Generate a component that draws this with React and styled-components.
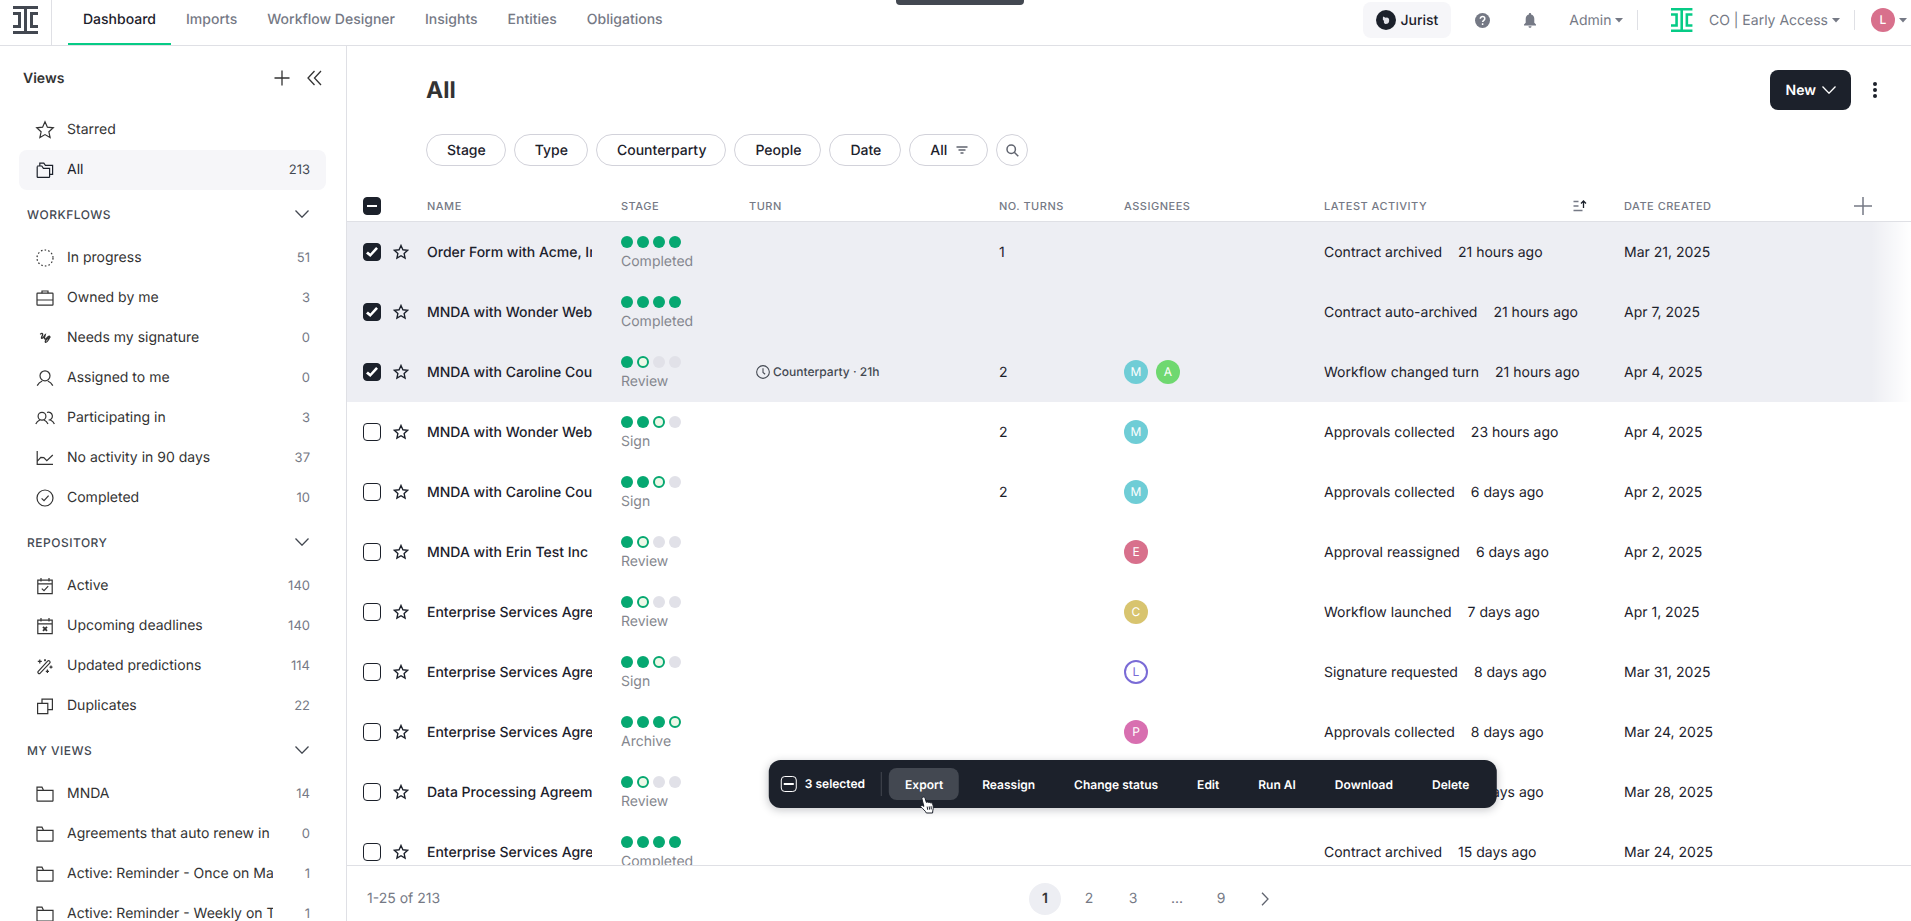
import React, { useEffect, useRef, useState } from "react";
import styled, { createGlobalStyle, css } from "styled-components";

const GlobalStyle = createGlobalStyle`
  * {
    box-sizing: border-box;
  }

  body {
    margin: 0;
    font-family: Inter, "Liberation Sans", sans-serif;
    font-size: 14px;
    color: #1c212b;
    background-color: white;
    text-rendering: geometricPrecision;
  }

  button,
  input {
    font: inherit;
    color: inherit;
    margin: 0;
    text-rendering: inherit;
  }

  a {
    color: inherit;
    text-decoration: none;
  }
`;

const Page = styled.div`
  height: 100vh;
  display: flex;
  flex-direction: column;
  overflow: hidden;
`;

const plainButton = css`
  display: flex;
  align-items: center;
  padding: 0;
  border: none;
  background: none;
  cursor: pointer;
`;

/* ---------- top bar ---------- */

const TopBar = styled.header`
  display: flex;
  height: 46px;
  flex-shrink: 0;
  border-bottom: 1px solid #dfe0e5;
`;

const HomeLink = styled.a`
  display: flex;
  justify-content: center;
  width: 52px;
  padding: 6px 0 0;
  border-right: 1px solid #dfe0e5;
`;

const Tabs = styled.nav`
  display: flex;
  margin-left: 16px;
`;

const Tab = styled.a`
  padding: 0 15px;
  line-height: 40px;
  font-weight: 500;
  white-space: nowrap;
  color: ${(props) => (props.$active ? "#1c212b" : "#757985")};
  border-bottom: 2px solid ${(props) => (props.$active ? "#06cb86" : "transparent")};
`;

const TopActions = styled.div`
  display: flex;
  align-items: center;
  height: 40px;
  margin-left: auto;
  padding-right: 4px;
  color: #757985;
`;

const JuristButton = styled.button`
  ${plainButton}
  gap: 4px;
  height: 36px;
  padding: 0 13px;
  margin-right: 23px;
  border-radius: 8px;
  background-color: #f6f6f9;
  color: #1c212b;
  font-weight: 500;
`;

const TopIconButton = styled.button`
  ${plainButton}
  justify-content: center;
  width: 16px;
  margin: 0 ${(props) => props.$space}px 0 0;
  color: #757985;
`;

const TopMenuButton = styled.button`
  ${plainButton}
  gap: 4px;
  white-space: nowrap;
`;

const TopDivider = styled.span`
  width: 1px;
  height: 20px;
  margin: 0 ${(props) => props.$after}px 0 14px;
  background-color: #dfe0e5;
`;

const OrgLogo = styled.span`
  display: flex;
  margin-right: 16px;
`;

const Notch = styled.div`
  position: absolute;
  top: 0;
  left: calc(50% + 4px);
  width: 128px;
  height: 5px;
  transform: translateX(-50%);
  border-radius: 0 0 4px 4px;
  background-color: #434851;
`;

/* ---------- sidebar ---------- */

const Body = styled.div`
  display: flex;
  flex: 1;
  min-height: 0;
`;

const Sidebar = styled.aside`
  width: 347px;
  flex-shrink: 0;
  padding: 0 20px 0 19px;
  overflow: hidden;
  border-right: 1px solid #dfe0e5;
  color: #333333;
`;

const SidebarHead = styled.div`
  display: flex;
  align-items: center;
  height: 64px;
  padding: 0 4px;
`;

const SidebarTitle = styled.h2`
  flex: 1;
  margin: 0;
  font-size: 14px;
  font-weight: 600;
`;

const SidebarIcon = styled.button`
  ${plainButton}
  margin-left: 17px;
`;

const SectionButton = styled.button`
  ${plainButton}
  justify-content: space-between;
  width: 100%;
  height: 48px;
  padding: 0 17px 0 8px;
  font-size: 12px;
  font-weight: 500;
  letter-spacing: 0.5px;
  text-transform: uppercase;
  color: #434851;
`;

const ViewList = styled.ul`
  margin: 0;
  padding: 0;
  list-style: none;
`;

const ViewLink = styled.a`
  display: flex;
  align-items: center;
  height: 40px;
  padding: 0 16px;
  border-radius: 8px;
  background-color: ${(props) => (props.$active ? "#f6f6f9" : "transparent")};
  color: ${(props) => (props.$active ? "#1c212b" : "#333333")};

  svg {
    flex-shrink: 0;
    margin-right: 12px;
  }
`;

const ViewName = styled.span`
  width: 206px;
  overflow: hidden;
  line-height: 20px;
  white-space: nowrap;
`;

const ViewCount = styled.span`
  margin-left: auto;
  font-size: 13px;
  line-height: 20px;
  color: ${(props) => (props.$active ? "#434851" : "#757985")};
`;

/* ---------- main ---------- */

const Main = styled.main`
  position: relative;
  display: flex;
  flex: 1;
  flex-direction: column;
  min-width: 0;
`;

const TitleRow = styled.div`
  display: flex;
  align-items: center;
  padding: 24px 24px 24px 79px;
`;

const Title = styled.h1`
  flex: 1;
  margin: 0;
  font-size: 23px;
  line-height: 40px;
  font-weight: 700;
  color: #333333;
`;

const NewButton = styled.button`
  ${plainButton}
  gap: 6px;
  height: 40px;
  padding: 0 15px 0 16px;
  border-radius: 8px;
  background-color: #1c212b;
  color: white;
  font-weight: 600;
`;

const KebabButton = styled.button`
  ${plainButton}
  justify-content: center;
  width: 24px;
  margin-left: 12px;
`;

const Filters = styled.div`
  display: flex;
  gap: 8px;
  padding-left: 79px;
`;

const FilterButton = styled.button`
  ${plainButton}
  gap: 9px;
  height: 32px;
  padding: 0 19px 0 20px;
  border: 1px solid #d2d2da;
  border-radius: 16px;
  font-weight: 500;
`;

const SearchButton = styled.button`
  ${plainButton}
  justify-content: center;
  width: 32px;
  height: 32px;
  border: 1px solid #d2d2da;
  border-radius: 50%;
`;

const TableFrame = styled.div`
  position: relative;
  flex: 1;
  min-height: 0;
  margin-top: 24px;
  overflow: hidden;

  &::after {
    content: "";
    position: absolute;
    top: 32px;
    right: 0;
    bottom: 0;
    width: 40px;
    background: linear-gradient(to right, rgba(255, 255, 255, 0), white);
    pointer-events: none;
  }
`;

const Table = styled.table`
  width: 100%;
  table-layout: fixed;
  border-collapse: separate;
  border-spacing: 0;
`;

const HeadCell = styled.th`
  height: 32px;
  padding: 0;
  border-bottom: 1px solid #dfe0e5;
  text-align: left;
  font-size: 11px;
  font-weight: 500;
  letter-spacing: 0.5px;
  text-transform: uppercase;
  white-space: nowrap;
  color: #757985;
`;

const SortHead = styled.div`
  display: flex;
  align-items: center;
  justify-content: space-between;
  padding-right: 37px;
`;

const AddColumn = styled.button`
  ${plainButton}
  margin: 0 39px 0 auto;
`;

const Row = styled.tr`
  height: 60px;
  background-color: ${(props) => (props.$selected ? "#edeef3" : "white")};
`;

const Cell = styled.td`
  padding: 0;
  line-height: 20px;
  white-space: nowrap;
`;

const TextCell = styled(Cell)`
  padding-top: 2px;
`;

const CheckCell = styled(Cell)`
  padding-left: 16px;
`;

const CheckHead = styled(HeadCell)`
  padding-left: 16px;
`;

const Checkbox = styled.input`
  display: grid;
  place-items: center;
  appearance: none;
  width: 18px;
  height: 18px;
  border: 1px solid #1c212b;
  border-radius: 4px;
  background-color: white;

  &:checked,
  &:indeterminate {
    background-color: #1c212b;
  }

  &:checked::before {
    content: "";
    width: 12px;
    height: 10px;
    background-color: white;
    clip-path: polygon(16% 46%, 0 64%, 36% 100%, 100% 18%, 84% 0, 36% 66%);
  }

  &:indeterminate::before {
    content: "";
    width: 10px;
    height: 2px;
    background-color: white;
    clip-path: none;
  }
`;

const BulkCheckbox = styled(Checkbox)`
  width: 16px;
  height: 16px;
  margin-right: 8px;
  border-color: white;
`;

const StarButton = styled.button`
  ${plainButton}
`;

const NameLink = styled.a`
  display: block;
  width: 165px;
  overflow: hidden;
  font-weight: 500;
`;

const StageCell = styled.div`
  display: flex;
  flex-direction: column;
  gap: 4px;
  padding-top: 4px;
  color: #84868e;
`;

const Dots = styled.div`
  display: flex;
  gap: 4px;
`;

const dotStyles = {
  done: css`
    background-color: #06a871;
  `,
  current: css`
    background-color: #edf8e8;
    border: 2px solid #06a871;
  `,
  todo: css`
    background-color: #e1e1e8;
  `,
};

const Dot = styled.span`
  width: 12px;
  height: 12px;
  border-radius: 50%;
  ${(props) => dotStyles[props.$state]}
`;

const Turn = styled.div`
  display: flex;
  align-items: center;
  gap: 3px;
  padding-left: 7px;
  font-size: 12px;
  font-weight: 500;
  color: #434851;
`;

const Avatars = styled.div`
  display: flex;
  gap: 8px;
`;

const Avatar = styled.span`
  display: flex;
  align-items: center;
  justify-content: center;
  width: 24px;
  height: 24px;
  border-radius: 50%;
  font-size: 12px;
  line-height: 1;
  font-weight: ${(props) => props.$weight || 400};
  color: ${(props) => (props.$outlined ? props.$color : "white")};
  background-color: ${(props) => (props.$outlined ? "white" : props.$color)};
  border: ${(props) => (props.$outlined ? `2px solid ${props.$color}` : "none")};
`;

const Activity = styled.div`
  display: flex;
  gap: 16px;
`;

/* ---------- bulk action bar ---------- */

const BulkBar = styled.div`
  position: absolute;
  left: calc(50% + 4px);
  bottom: 113px;
  transform: translateX(-50%);
  display: flex;
  align-items: center;
  gap: 7px;
  height: 48px;
  padding: 0 12px;
  border-radius: 12px;
  background-color: #1c212b;
  color: white;
  font-size: 12px;
  font-weight: 600;
  white-space: nowrap;
  box-shadow: 0 2px 8px rgba(28, 33, 43, 0.25);
`;

const SelectedLabel = styled.label`
  display: flex;
  align-items: center;
  padding-right: 16px;
  line-height: 24px;
  border-right: 1px solid #434851;
`;

const BulkAction = styled.button`
  ${plainButton}
  position: relative;
  height: 32px;
  padding: 0 16px;
  border-radius: 8px;
  background-color: ${(props) => (props.$hovered ? "#434851" : "transparent")};
`;

const Pointer = styled.svg`
  position: absolute;
  top: 28px;
  left: 30px;
`;

/* ---------- footer ---------- */

const Footer = styled.footer`
  display: grid;
  grid-template-columns: 1fr auto 1fr;
  align-items: center;
  height: 56px;
  flex-shrink: 0;
  padding-bottom: 2px;
  padding-top: 12px;
  border-top: 1px solid #dfe0e5;
  color: #757985;
`;

const ResultCount = styled.span`
  padding-left: 20px;
`;

const Pages = styled.nav`
  display: flex;
  gap: 12px;
  padding-left: 52px;
`;

const PageButton = styled.button`
  ${plainButton}
  justify-content: center;
  width: 32px;
  height: 32px;
  border-radius: 50%;
  font-weight: ${(props) => (props.$current ? 600 : 400)};
  background-color: ${(props) => (props.$current ? "#edeef3" : "transparent")};
  color: ${(props) => (props.$current ? "#333333" : "#757985")};
`;

/* ---------- icons ---------- */

const Icon = ({ size = 20, width = 1.2, children }) => (
  <svg
    width={size}
    height={size}
    viewBox="0 0 20 20"
    fill="none"
    stroke="currentColor"
    strokeWidth={width}
    aria-hidden="true"
  >
    {children}
  </svg>
);

const Logo = ({ height, color }) => (
  <svg width={(height * 25) / 28} height={height} viewBox="0 0 25 28" fill={color} aria-hidden="true">
    <path d="M0 0h25v3H14v22h11v3H0v-3h11V3H0z" />
    <path d="M0 6h8v16H0v-3h5V9H0zM25 6h-8v16h8v-3h-5V9h5z" />
  </svg>
);

const Caret = () => (
  <svg width="8" height="5" viewBox="0 0 8 5" fill="currentColor" aria-hidden="true">
    <path d="M0 0h8L4 4.5z" />
  </svg>
);

const ChevronDown = () => (
  <svg width="14" height="8" viewBox="0 0 14 8" fill="none" stroke="currentColor" strokeWidth="1.3" aria-hidden="true">
    <path d="M.5.5 7 7.2 13.5.5" />
  </svg>
);

const starPath =
  "M10 1.8l2.4 5.4 5.9.6-4.4 4 1.2 5.8-5.1-3-5.1 3 1.2-5.8-4.4-4 5.9-.6z";
const folderPath = "M2 4V16.6a.6.6 0 0 0 .6.6H17.4a.6.6 0 0 0 .6-.6V6.4H8.6L7 3.2H2V6.4H8";
const calendarPath = "M2.8 4.2H17.2V17.6H2.8zM2.8 7.8H17.2M6 2v3.4M14 2v3.4";

const icons = {
  star: <path d={starPath} />,
  folders: (
    <>
      <path d="M2.2 6.4V16.8a.6.6 0 0 0 .6.6H14a.6.6 0 0 0 .6-.6V8.4H8.4L6.8 6H2.2" />
      <path d="M4.8 6V3.2H8.8L10.4 5.4H17.6V14.4H14.6" />
    </>
  ),
  progress: <circle cx="10" cy="10" r="8" strokeDasharray="1.6 2.1" />,
  briefcase: (
    <>
      <rect x="2" y="5.2" width="16" height="12" rx=".6" />
      <path d="M2 12h16M7 5.2V3h6v2.2" />
    </>
  ),
  signature: (
    <path
      d="M5.2 6.4C6.4 5.2 8 5 7.6 6.8c-.3 1.4-1.8 3.2-.8 3.600 1.400.4 2.600-3 3.400-3.600-.4 1.600-1.400 4-.2 4.200 1.600.2 2.800-3.400 4.400-2.800 1.200.8-2.400 6.600-3.800 6.200-1.400-.6 1.400-4.600 5-5.600"
      strokeWidth="1.3"
    />
  ),
  person: (
    <>
      <circle cx="10" cy="7.8" r="5" />
      <path d="M2.2 17.6c1.4-2.6 3.2-3.8 5-4.6M17.8 17.6c-1.4-2.6-3.2-3.8-5-4.6" />
    </>
  ),
  people: (
    <>
      <circle cx="7" cy="8.2" r="3.9" />
      <path d="M.8 16c1-2.2 2.4-3.2 4-4M13 16c-1-2.2-2.4-3.2-4-4" />
      <path d="M12 4.5a3.9 3.9 0 1 1 1.6 7.5M15.4 12c1.6.8 3 1.8 4 4" />
    </>
  ),
  chart: <path d="M2.2 3V16.4H18M2.4 13.2l3.4-3.8 3 .2 3 3L17.8 7" />,
  done: (
    <>
      <circle cx="10" cy="10" r="8" />
      <path d="M6.6 10.4l2.4 2.2 4.6-5" />
    </>
  ),
  calendarCheck: <path d={`${calendarPath}M6.8 12.6l2.2 2 4.2-4.4`} />,
  calendarX: (
    <>
      <path d={calendarPath} />
      <path d="M8 10.8l4 4M12 10.8l-4 4" strokeWidth="1.8" />
    </>
  ),
  wand: (
    <>
      <path d="M3 15.6L12.6 5.2a1.4 1.4 0 0 1 2.1 2L5 17.4a1.4 1.4 0 0 1-2-1.8z" />
      <path d="M4.8 3.4v4M2.8 5.4h4M10 3.2v2M9 4.2h2M16 9.6v3M14.5 11.1h3M12.4 13.6v3.4M10.8 15.3h3.2" />
    </>
  ),
  duplicates: <path d="M2.6 7.4H12.8V17.6H2.6zM7 7.4V3.2H17.4V13.6H12.8" />,
  folder: <path d={folderPath} />,
};

const PointerHand = () => (
  <Pointer width="17" height="19" viewBox="0 0 17 19" aria-hidden="true">
    <path
      d="M4.2 1.2c1-.4 1.8.2 2.1 1.1l1.3 4.1c.8-.7 1.7-.5 2.1.2.8-.5 1.6-.3 2 .4 1-.4 1.9.1 2.2 1 .6 2 .9 4.1.2 6.2l-.3 2.8H7.6C6.4 14.6 4.3 13 2.3 11.2c-1-1.1.3-2.3 1.5-1.6l1.3.8L3.2 3c-.2-.8.2-1.5 1-1.8z"
      fill="white"
      stroke="#1c212b"
      strokeWidth="1"
    />
    <path d="M8.4 10.6l.5 3.2M10.4 10.4l.4 3.2M12.3 10.2l.2 3.2" stroke="#1c212b" fill="none" />
  </Pointer>
);

/* ---------- data ---------- */

const tabs = ["Dashboard", "Imports", "Workflow Designer", "Insights", "Entities", "Obligations"];

const sections = [
  {
    title: "Workflows",
    views: [
      { icon: "progress", name: "In progress", count: 51 },
      { icon: "briefcase", name: "Owned by me", count: 3 },
      { icon: "signature", name: "Needs my signature", count: 0 },
      { icon: "person", name: "Assigned to me", count: 0 },
      { icon: "people", name: "Participating in", count: 3 },
      { icon: "chart", name: "No activity in 90 days", count: 37 },
      { icon: "done", name: "Completed", count: 10 },
    ],
  },
  {
    title: "Repository",
    views: [
      { icon: "calendarCheck", name: "Active", count: 140 },
      { icon: "calendarX", name: "Upcoming deadlines", count: 140 },
      { icon: "wand", name: "Updated predictions", count: 114 },
      { icon: "duplicates", name: "Duplicates", count: 22 },
    ],
  },
  {
    title: "My views",
    views: [
      { icon: "folder", name: "MNDA", count: 14 },
      { icon: "folder", name: "Agreements that auto renew in", count: 0 },
      { icon: "folder", name: "Active: Reminder - Once on Ma", count: 1 },
      { icon: "folder", name: "Active: Reminder - Weekly on T", count: 1 },
    ],
  },
];

const filters = ["Stage", "Type", "Counterparty", "People", "Date"];

// step: index of the current stage dot, 4 = everything done
const stages = { Review: 1, Sign: 2, Archive: 3, Completed: 4 };

const people = {
  M: { color: "#6fcdd6" },
  A: { color: "#6fd870" },
  E: { color: "#d8708c" },
  C: { color: "#d8c46f" },
  L: { color: "#7a6bd6", outlined: true },
  P: { color: "#d86fb0" },
};

const contracts = [
  { name: "Order Form with Acme, Inc.", stage: "Completed", turns: 1, activity: "Contract archived", when: "21 hours ago", created: "Mar 21, 2025" },
  { name: "MNDA with Wonder Web", stage: "Completed", activity: "Contract auto-archived", when: "21 hours ago", created: "Apr 7, 2025" },
  { name: "MNDA with Caroline Cou", stage: "Review", turn: "Counterparty · 21h", turns: 2, assignees: ["M", "A"], activity: "Workflow changed turn", when: "21 hours ago", created: "Apr 4, 2025" },
  { name: "MNDA with Wonder Web", stage: "Sign", turns: 2, assignees: ["M"], activity: "Approvals collected", when: "23 hours ago", created: "Apr 4, 2025" },
  { name: "MNDA with Caroline Cou", stage: "Sign", turns: 2, assignees: ["M"], activity: "Approvals collected", when: "6 days ago", created: "Apr 2, 2025" },
  { name: "MNDA with Erin Test Inc", stage: "Review", assignees: ["E"], activity: "Approval reassigned", when: "6 days ago", created: "Apr 2, 2025" },
  { name: "Enterprise Services Agre", stage: "Review", assignees: ["C"], activity: "Workflow launched", when: "7 days ago", created: "Apr 1, 2025" },
  { name: "Enterprise Services Agre", stage: "Sign", assignees: ["L"], activity: "Signature requested", when: "8 days ago", created: "Mar 31, 2025" },
  { name: "Enterprise Services Agre", stage: "Archive", assignees: ["P"], activity: "Approvals collected", when: "8 days ago", created: "Mar 24, 2025" },
  { name: "Data Processing Agreem", stage: "Review", activity: "Approvals collected", when: "8 days ago", created: "Mar 28, 2025" },
  { name: "Enterprise Services Agre", stage: "Completed", activity: "Contract archived", when: "15 days ago", created: "Mar 24, 2025" },
];

const bulkActions = ["Export", "Reassign", "Change status", "Edit", "Run AI", "Download", "Delete"];

const dotState = (index, step) => {
  if (index < step) return "done";
  return index === step ? "current" : "todo";
};

/* ---------- components ---------- */

const PartialCheckbox = ({ as: Box = Checkbox, ...props }) => {
  const ref = useRef(null);
  useEffect(() => {
    ref.current.indeterminate = true;
  });
  return <Box ref={ref} type="checkbox" {...props} />;
};

const ViewItem = ({ icon, name, count, active }) => (
  <li>
    <ViewLink href="#" $active={active}>
      <Icon>{icons[icon]}</Icon>
      <ViewName>{name}</ViewName>
      {count !== undefined && <ViewCount $active={active}>{count}</ViewCount>}
    </ViewLink>
  </li>
);

const TopNavigation = () => (
  <TopBar>
    <HomeLink href="#" aria-label="Home">
      <Logo height={28} color="#434851" />
    </HomeLink>
    <Tabs>
      {tabs.map((tab) => (
        <Tab key={tab} href="#" $active={tab === "Dashboard"}>
          {tab}
        </Tab>
      ))}
    </Tabs>
    <TopActions>
      <JuristButton>
        <svg width="20" height="20" viewBox="0 0 20 20" aria-hidden="true">
          <circle cx="10" cy="10" r="10" fill="#1c212b" />
          <path d="M7 6.4l2.6 1.4 1.4-.2c2 .4 2.6 2.2 2 4.2-.4 1.6-2 2.4-3.6 2.2-1.4-.4-1.8-1.6-1.4-3L6.8 9.4z" fill="#e1e1e8" />
        </svg>
        Jurist
      </JuristButton>
      <TopIconButton $space={32} aria-label="Help">
        <svg width="15" height="15" viewBox="0 0 15 15" aria-hidden="true">
          <circle cx="7.5" cy="7.5" r="7.5" fill="currentColor" />
          <path d="M5.3 5.8c0-3 4.5-2.8 4.5-.1 0 1.6-2.2 1.7-2.2 3.4M7.6 10.3v1.6" stroke="white" strokeWidth="1.5" fill="none" />
        </svg>
      </TopIconButton>
      <TopIconButton $space={31} aria-label="Notifications">
        <svg width="12" height="15" viewBox="0 0 12 15" fill="currentColor" aria-hidden="true">
          <path d="M6 0c.7 0 1.1.4 1.1 1v.4c2 .5 3.2 2.2 3.2 4.4v4L12 11.6v.8H0v-.8l1.7-1.8v-4c0-2.2 1.2-3.9 3.2-4.4V1c0-.6.4-1 1.1-1zM4.5 13.2h3c0 2-3 2-3 0z" />
        </svg>
      </TopIconButton>
      <TopMenuButton>
        Admin <Caret />
      </TopMenuButton>
      <TopDivider $after={33} />
      <OrgLogo>
        <Logo height={24} color="#06cb86" />
      </OrgLogo>
      <TopMenuButton>
        CO | Early Access <Caret />
      </TopMenuButton>
      <TopDivider $after={16} />
      <TopMenuButton aria-label="Account">
        <Avatar $color="#d8708c" $weight={500}>
          L
        </Avatar>
        <Caret />
      </TopMenuButton>
    </TopActions>
    <Notch />
  </TopBar>
);

const ViewsSidebar = () => (
  <Sidebar>
    <SidebarHead>
      <SidebarTitle>Views</SidebarTitle>
      <SidebarIcon aria-label="Add view">
        <svg width="16" height="16" viewBox="0 0 16 16" fill="none" stroke="currentColor" strokeWidth="1.3">
          <path d="M8 .5v15M.5 8h15" />
        </svg>
      </SidebarIcon>
      <SidebarIcon aria-label="Collapse sidebar">
        <svg width="15" height="16" viewBox="0 0 15 16" fill="none" stroke="currentColor" strokeWidth="1.3">
          <path d="M7.5 1L1 8l6.5 7M14 1L7.5 8l6.5 7" />
        </svg>
      </SidebarIcon>
    </SidebarHead>
    <ViewList>
      <ViewItem icon="star" name="Starred" />
      <ViewItem icon="folders" name="All" count={213} active />
    </ViewList>
    {sections.map((section) => (
      <section key={section.title}>
        <SectionButton>
          {section.title}
          <ChevronDown />
        </SectionButton>
        <ViewList>
          {section.views.map((view) => (
            <ViewItem key={view.name} {...view} />
          ))}
        </ViewList>
      </section>
    ))}
  </Sidebar>
);

const ContractRow = ({ contract, selected, onToggle }) => {
  const step = stages[contract.stage];

  return (
    <Row $selected={selected}>
      <CheckCell>
        <Checkbox type="checkbox" aria-label={contract.name} checked={selected} onChange={onToggle} />
      </CheckCell>
      <Cell>
        <StarButton aria-label="Star">
          <Icon size={16} width={1.7}>
            {icons.star}
          </Icon>
        </StarButton>
      </Cell>
      <TextCell>
        <NameLink href="#">{contract.name}</NameLink>
      </TextCell>
      <Cell>
        <StageCell>
          <Dots>
            {[0, 1, 2, 3].map((i) => (
              <Dot key={i} $state={dotState(i, step)} />
            ))}
          </Dots>
          {contract.stage}
        </StageCell>
      </Cell>
      <Cell>
        {contract.turn && (
          <Turn>
            <svg width="14" height="14" viewBox="0 0 13 13" fill="none" stroke="currentColor">
              <circle cx="6.5" cy="6.5" r="5.9" />
              <path d="M6.5 3v4l2 1.6" />
            </svg>
            {contract.turn}
          </Turn>
        )}
      </Cell>
      <TextCell>{contract.turns}</TextCell>
      <Cell>
        <Avatars>
          {(contract.assignees || []).map((person) => (
            <Avatar key={person} $color={people[person].color} $outlined={people[person].outlined}>
              {person}
            </Avatar>
          ))}
        </Avatars>
      </Cell>
      <TextCell>
        <Activity>
          <span>{contract.activity}</span>
          <span>{contract.when}</span>
        </Activity>
      </TextCell>
      <TextCell>{contract.created}</TextCell>
      <Cell />
    </Row>
  );
};

const ContractTable = ({ selected, onToggle }) => (
  <TableFrame>
    <Table>
      <colgroup>
        <col width="46" />
        <col width="34" />
        <col width="194" />
        <col width="128" />
        <col width="250" />
        <col width="125" />
        <col width="200" />
        <col width="300" />
        <col width="200" />
        <col />
      </colgroup>
      <thead>
        <tr>
          <CheckHead>
            <PartialCheckbox aria-label="Select all" />
          </CheckHead>
          <HeadCell />
          <HeadCell>Name</HeadCell>
          <HeadCell>Stage</HeadCell>
          <HeadCell>Turn</HeadCell>
          <HeadCell>No. turns</HeadCell>
          <HeadCell>Assignees</HeadCell>
          <HeadCell>
            <SortHead>
              Latest activity
              <svg width="14" height="12" viewBox="0 0 14 12" fill="none" stroke="currentColor" strokeWidth="1.3" aria-hidden="true">
                <path d="M.5 1.5h5M.5 6h5M.5 10.5h9" />
                <path d="M10.5 8V1M8 3.5L10.5 1 13 3.5" stroke="#1c212b" />
              </svg>
            </SortHead>
          </HeadCell>
          <HeadCell>Date created</HeadCell>
          <HeadCell>
            <AddColumn aria-label="Add column">
              <svg width="18" height="18" viewBox="0 0 18 18" fill="none" stroke="#757985" strokeWidth="1.5">
                <path d="M9 0v18M0 9h18" />
              </svg>
            </AddColumn>
          </HeadCell>
        </tr>
      </thead>
      <tbody>
        {contracts.map((contract, index) => (
          <ContractRow
            key={index}
            contract={contract}
            selected={selected.includes(index)}
            onToggle={() => onToggle(index)}
          />
        ))}
      </tbody>
    </Table>
  </TableFrame>
);

const App = () => {
  const [selected, setSelected] = useState([0, 1, 2]);

  const toggle = (index) =>
    setSelected((prev) =>
      prev.includes(index) ? prev.filter((i) => i !== index) : [...prev, index]
    );

  return (
    <Page>
      <GlobalStyle />
      <TopNavigation />
      <Body>
        <ViewsSidebar />
        <Main>
          <TitleRow>
            <Title>All</Title>
            <NewButton>
              New <ChevronDown />
            </NewButton>
            <KebabButton aria-label="More">
              <svg width="4" height="16" viewBox="0 0 4 16" fill="currentColor">
                <circle cx="2" cy="2" r="2" />
                <circle cx="2" cy="8" r="2" />
                <circle cx="2" cy="14" r="2" />
              </svg>
            </KebabButton>
          </TitleRow>
          <Filters>
            {filters.map((filter) => (
              <FilterButton key={filter}>{filter}</FilterButton>
            ))}
            <FilterButton>
              All
              <svg width="12" height="8" viewBox="0 0 12 8" fill="none" stroke="#60646f" strokeWidth="1.3" aria-hidden="true">
                <path d="M.5 1h11M2.5 4h7M4.5 7h3" />
              </svg>
            </FilterButton>
            <SearchButton aria-label="Search">
              <svg width="13" height="13" viewBox="0 0 13 13" fill="none" stroke="#60646f" strokeWidth="1.5">
                <circle cx="5.2" cy="5.2" r="4.2" />
                <path d="M8.3 8.3l4 4" />
              </svg>
            </SearchButton>
          </Filters>
          <ContractTable selected={selected} onToggle={toggle} />
          {selected.length > 0 && (
            <BulkBar>
              <SelectedLabel>
                <PartialCheckbox as={BulkCheckbox} />
                {selected.length} selected
              </SelectedLabel>
              {bulkActions.map((action) => (
                <BulkAction key={action} $hovered={action === "Export"}>
                  {action}
                  {action === "Export" && <PointerHand />}
                </BulkAction>
              ))}
            </BulkBar>
          )}
          <Footer>
            <ResultCount>1-25 of 213</ResultCount>
            <Pages>
              {["1", "2", "3", "...", "9"].map((page) => (
                <PageButton key={page} $current={page === "1"}>
                  {page}
                </PageButton>
              ))}
              <PageButton aria-label="Next page">
                <svg width="8" height="14" viewBox="0 0 8 14" fill="none" stroke="#60646f" strokeWidth="1.3">
                  <path d="M1 .8L7 7l-6 6.2" />
                </svg>
              </PageButton>
            </Pages>
          </Footer>
        </Main>
      </Body>
    </Page>
  );
};

export default App;
